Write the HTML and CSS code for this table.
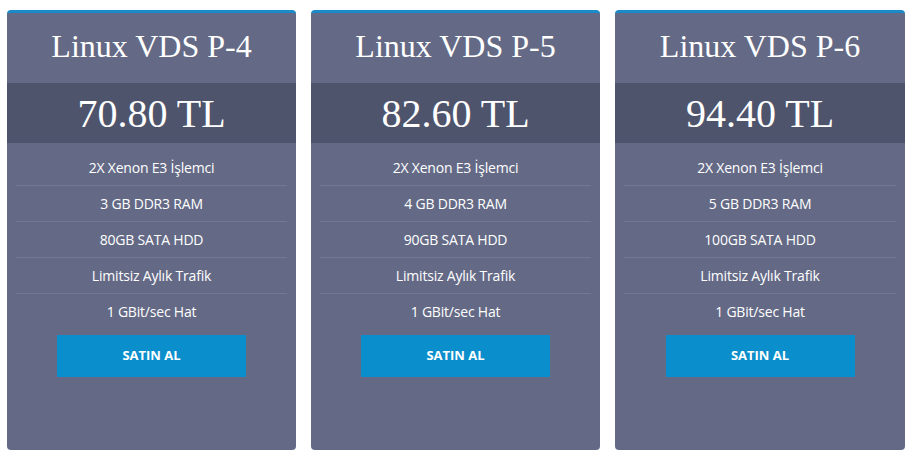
FILE: index.html
```html
<!DOCTYPE html>
<html lang="tr">
<head>
<meta charset="utf-8">
<title>Linux VDS</title>
<link rel="stylesheet" href="styles.css">
</head>
<body>
<div class="plans">
  <div class="card">
    <div class="title">Linux VDS P-4</div>
    <div class="price">70.80 TL</div>
    <ul class="features">
      <li>2X Xenon E3 İşlemci</li>
      <li>3 GB DDR3 RAM</li>
      <li>80GB SATA HDD</li>
      <li>Limitsiz Aylık Trafik</li>
      <li>1 GBit/sec Hat</li>
    </ul>
    <a class="buy" href="#">SATIN AL</a>
  </div>
  <div class="card">
    <div class="title">Linux VDS P-5</div>
    <div class="price">82.60 TL</div>
    <ul class="features">
      <li>2X Xenon E3 İşlemci</li>
      <li>4 GB DDR3 RAM</li>
      <li>90GB SATA HDD</li>
      <li>Limitsiz Aylık Trafik</li>
      <li>1 GBit/sec Hat</li>
    </ul>
    <a class="buy" href="#">SATIN AL</a>
  </div>
  <div class="card">
    <div class="title">Linux VDS P-6</div>
    <div class="price">94.40 TL</div>
    <ul class="features">
      <li>2X Xenon E3 İşlemci</li>
      <li>5 GB DDR3 RAM</li>
      <li>100GB SATA HDD</li>
      <li>Limitsiz Aylık Trafik</li>
      <li>1 GBit/sec Hat</li>
    </ul>
    <a class="buy" href="#">SATIN AL</a>
  </div>
</div>
</body>
</html>
```

FILE: styles.css
```css
html, body {
  margin: 0;
  padding: 0;
  background: #ffffff;
}

.plans {
  display: grid;
  grid-template-columns: 289px 289px 290px;
  column-gap: 15px;
  padding: 10px 0 0 7px;
}

.card {
  height: 437px;
  background: #646a86;
  border-top: 3px solid #1a8ac8;
  border-radius: 4px;
  display: flex;
  flex-direction: column;
  align-items: center;
  color: #ffffff;
}

.title {
  align-self: stretch;
  height: 70px;
  display: flex;
  align-items: center;
  justify-content: center;
  font-family: "Liberation Serif", "Times New Roman", serif;
  font-size: 32px;
  padding-bottom: 4px;
  box-sizing: border-box;
}

.price {
  align-self: stretch;
  height: 60px;
  background: #4f546d;
  display: flex;
  align-items: center;
  justify-content: center;
  font-family: "Liberation Serif", "Times New Roman", serif;
  font-size: 40px;
}

.features {
  align-self: stretch;
  list-style: none;
  margin: 0 9px;
  padding: 7px 0 0;
  font-family: "Open Sans", "Liberation Sans", sans-serif;
  font-size: 14px;
  letter-spacing: -0.2px;
}

.features li {
  height: 35px;
  line-height: 35px;
  text-align: center;
  border-bottom: 1px solid #737994;
}

.features li:last-child {
  border-bottom: none;
}

.buy {
  margin-top: 6px;
  width: 189px;
  height: 42px;
  background: #0b8fcc;
  color: #ffffff;
  text-decoration: none;
  display: flex;
  align-items: center;
  justify-content: center;
  font-family: "Open Sans", "Liberation Sans", sans-serif;
  font-weight: 700;
  font-size: 13px;
  letter-spacing: 0;
  padding-bottom: 2px;
  box-sizing: border-box;
}
```
